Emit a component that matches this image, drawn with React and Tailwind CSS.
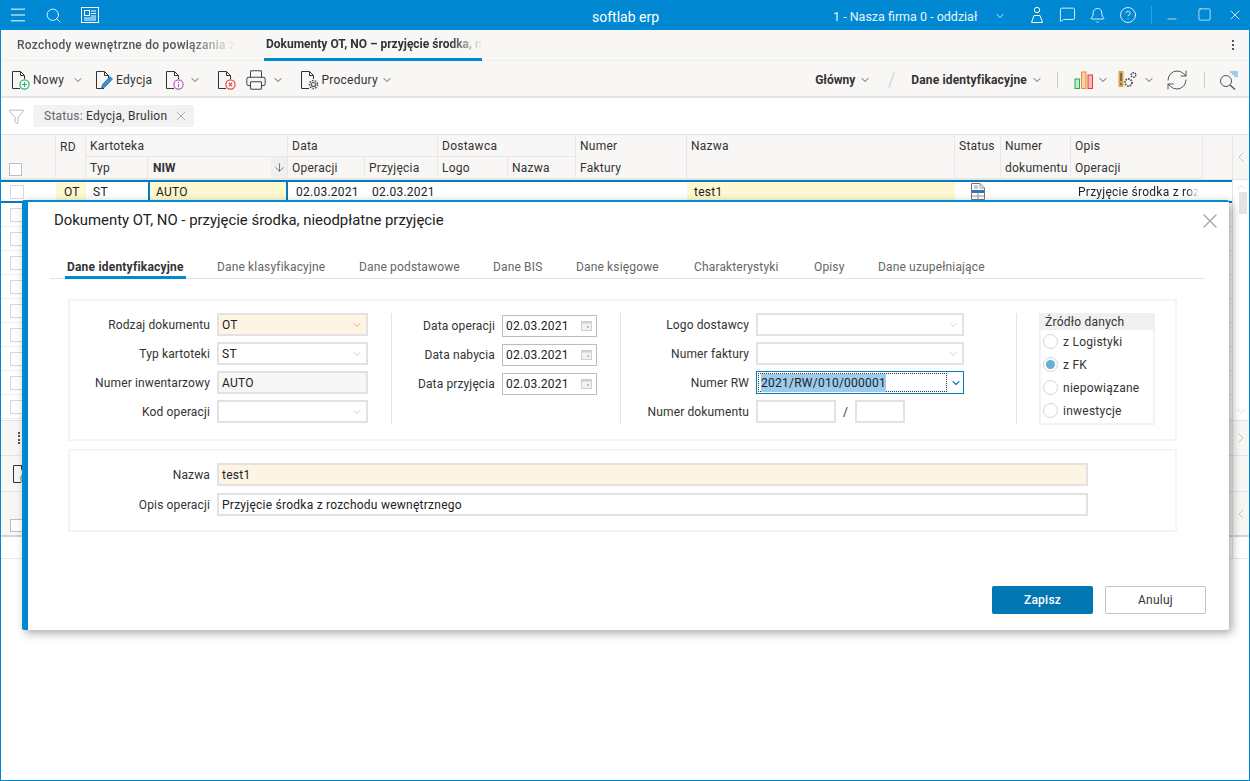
import { ChevronDown, ChevronLeft, ChevronRight, ChevronUp, X, Search, Menu, MessageSquare, Bell, CircleHelp, Minus, Square, RefreshCw, ArrowDown, Filter, Printer } from "lucide-react";

function Doc({ badge }) {
  return (
    <svg width="20" height="20" viewBox="0 0 20 20" fill="none">
      <path d="M9 18.5H1.5V1.5H9.5L13.5 5.5V9" stroke="#333" strokeWidth="1" />
      <path d="M9.5 1.5V5.5H13.5" stroke="#333" strokeWidth="1" />
      {badge}
    </svg>
  );
}

const GreenPlus = (
  <g stroke="#27b36a" strokeWidth="1.2" fill="#fff">
    <circle cx="13.5" cy="14.5" r="4.6" />
    <path d="M13.5 12V17M11 14.5H16" />
  </g>
);
const Pencil = (
  <g>
    <path d="M6.5 18L7.5 14.5L15 6.5L17.5 9L10 17Z" fill="#3a8fd0" stroke="#1f6fb0" strokeWidth="0.8" />
  </g>
);
const InfoBadge = (
  <g stroke="#b45cc0" strokeWidth="1.2" fill="#fff">
    <circle cx="13.5" cy="14.5" r="4.6" />
    <path d="M13.5 14V17.2M13.5 11.8V12.9" />
  </g>
);
const RedX = (
  <g stroke="#e0413a" strokeWidth="1.2" fill="#fff">
    <circle cx="13.5" cy="14.5" r="4.6" />
    <path d="M11.7 12.7L15.3 16.3M15.3 12.7L11.7 16.3" />
  </g>
);
const Gear = (
  <g stroke="#555" strokeWidth="1.2" fill="#fff">
    <circle cx="13.5" cy="14.5" r="2" />
    <circle cx="13.5" cy="14.5" r="4" strokeDasharray="1.6 1.2" strokeWidth="1.6" fill="none" />
  </g>
);

function Chev({ className = "text-[#444]", sw = 1.6 }) {
  return <ChevronDown size={12} strokeWidth={sw} className={className} />;
}

function Sel({ w = "w-[151px]", bg = "bg-white", text, chev = "text-[#c4c4c4]" }) {
  return (
    <div className={`${w} ${bg} h-[23px] border-2 border-[#e2e2e2] flex items-center justify-between pl-[3px] pr-[3px] text-[#222]`}>
      <span className="pt-px">{text}</span>
      <Chev className={chev} />
    </div>
  );
}

function Field({ label, w = "w-[140px]", children }) {
  return (
    <div className="flex items-center gap-[7px] h-[23px]">
      <span className={`${w} text-right text-[#333] pt-px tracking-[0.13px]`}>{label}</span>
      {children}
    </div>
  );
}

function DateInput({ v }) {
  return (
    <div className="w-[95px] h-[22px] border border-[#bdbdbd] flex items-center justify-between pl-[3px] pr-[3px] text-[#222]">
      <span>{v}</span>
      <svg width="12" height="12" viewBox="0 0 12 12" fill="none">
        <rect x="0.5" y="1.5" width="10" height="9" fill="#f2f2f2" stroke="#cfcfcf" />
        <rect x="0.5" y="1.5" width="10" height="2" fill="#cfcfcf" />
        <rect x="6" y="6" width="2" height="2" fill="#bbb" />
      </svg>
    </div>
  );
}

function Radio({ label, on }) {
  return (
    <div className="flex items-center gap-[5px] h-[23px] pl-[1px]">
      <span className="w-[15px] h-[15px] rounded-full border border-[#d4d4d4] flex items-center justify-center">
        {on && <span className="w-[9px] h-[9px] rounded-full bg-[#66afd9]" />}
      </span>
      <span className="text-[#333]">{label}</span>
    </div>
  );
}

const gridCols = "grid-cols-[55px_30px_62px_140px_77px_73px_70px_68px_111px_268px_46px_70px_132px]";

function HeadCell({ className = "", children }) {
  return (
    <div className={`flex items-center pl-[4px] border-r border-b border-[#e8e8e8] text-[#333] ${className}`}>
      {children}
    </div>
  );
}

export default function App() {
  const rows = [0, 1, 2, 3, 4, 5, 6, 7, 8];
  const tabs = [
    ["Dane identyfikacyjne", "w-[150px]"],
    ["Dane klasyfikacyjne", "w-[142px]"],
    ["Dane podstawowe", "w-[134px]"],
    ["Dane BIS", "w-[83px]"],
    ["Dane księgowe", "w-[118px]"],
    ["Charakterystyki", "w-[120px]"],
    ["Opisy", "w-[64px]"],
    ["Dane uzupełniające", "w-[120px]"],
  ];

  return (
    <div
      className="relative w-[1250px] h-[781px] overflow-hidden bg-white border border-[#0088d3] text-[12px] tracking-[0.25px]"
      style={{ fontFamily: "Roboto, 'Liberation Sans', sans-serif" }}
    >
      {/* title bar */}
      <div className="h-[30px] -mt-px -mx-px bg-[#0088d3] flex items-center text-white relative">
        <Menu size={20} strokeWidth={1.2} className="ml-[8px]" />
        <Search size={17} strokeWidth={1.2} className="ml-[17px]" />
        <svg width="18" height="16" viewBox="0 0 18 16" fill="none" stroke="#fff" className="ml-[19px]">
          <rect x="0.5" y="0.5" width="17" height="15" />
          <rect x="3.5" y="3.5" width="5" height="5" />
          <path d="M10 4H15M10 6.5H15M10 9H15M3 11H15M3 13H15" />
        </svg>
        <span className="absolute left-[592px] top-[7px] text-[14px] tracking-normal">softlab erp</span>
        <span className="absolute left-[833px] top-[8px] text-[12.5px] tracking-normal text-[#e6f4fb]">1 - Nasza firma 0 - oddział</span>
        <Chev className="absolute left-[994px] top-[10px] text-white" />
        <svg width="14" height="18" viewBox="0 0 14 18" fill="none" stroke="#fff" className="absolute left-[1030px] top-[6px]">
          <circle cx="7" cy="4" r="2.7" />
          <path d="M1.5 16.5L4 9.5H10L12.5 16.5Z" />
        </svg>
        <MessageSquare size={17} strokeWidth={1.2} className="absolute left-[1059px] top-[6px]" />
        <Bell size={17} strokeWidth={1.2} className="absolute left-[1089px] top-[7px]" />
        <CircleHelp size={18} strokeWidth={1.1} className="absolute left-[1119px] top-[6px]" />
        <span className="absolute left-[1151px] top-[6px] w-px h-[18px] bg-[#2e9fdc]" />
        <Minus size={14} strokeWidth={1.2} className="absolute left-[1165px] top-[12px]" />
        <Square size={15} strokeWidth={1.1} className="absolute left-[1197px] top-[7px]" />
        <X size={16} strokeWidth={1.2} className="absolute left-[1227px] top-[7px]" />
      </div>

      {/* tabs */}
      <div className="h-[31px] bg-[#f8f7f5] border-b border-[#eeeeec] flex items-center relative">
        <span className="ml-[16px] w-[219px] whitespace-nowrap text-[#555] font-medium tracking-[0.25px] [mask-image:linear-gradient(to_right,#000_78%,transparent)]">
          Rozchody wewnętrzne do powiązania z
        </span>
        <div className="ml-[28px] w-[218px] h-[31px] border-b-[3px] border-[#0088d3] flex items-center pl-[2px]">
          <span className="whitespace-nowrap font-bold text-[#333] tracking-normal [mask-image:linear-gradient(to_right,#000_85%,transparent)]">
            Dokumenty OT, NO – przyjęcie środka, n
          </span>
        </div>
        <span className="absolute left-[1231px] top-[10px] w-[2px] h-[10px] border-l-2 border-dotted border-[#555]" />
      </div>

      {/* toolbar */}
      <div className="h-[37px] pt-[3px] bg-[#f8f7f5] border-b-2 border-[#e4e4e4] flex items-center text-[#333] relative">
        <div className="ml-[10px] flex items-center">
          <Doc badge={GreenPlus} />
          <span className="ml-[2px]">Nowy</span>
          <Chev className="ml-[8px] text-[#444]" />
        </div>
        <div className="ml-[11px] flex items-center">
          <Doc badge={Pencil} />
          <span className="ml-px">Edycja</span>
        </div>
        <div className="ml-[13px] flex items-center">
          <Doc badge={InfoBadge} />
          <Chev className="ml-[4px]" />
        </div>
        <div className="ml-[16px]">
          <Doc badge={RedX} />
        </div>
        <div className="ml-[8px] flex items-center">
          <Printer size={22} strokeWidth={1.1} className="text-[#444]" />
          <Chev className="ml-[5px]" />
        </div>
        <div className="ml-[16px] flex items-center">
          <Doc badge={Gear} />
          <span className="ml-[1px]">Procedury</span>
          <Chev className="ml-[3px]" />
        </div>

        <div className="ml-auto flex items-center">
          <span className="font-bold tracking-normal">Główny</span>
          <Chev className="ml-[4px]" />
          <span className="ml-[20px] w-px h-[16px] bg-[#ccc] rotate-[20deg]" />
          <span className="ml-[19px] font-bold tracking-[0.15px]">Dane identyfikacyjne</span>
          <Chev className="ml-[4px]" />
          <span className="ml-[14px] w-px h-[16px] bg-[#ccc]" />
          <svg width="20" height="20" viewBox="0 0 20 20" className="ml-[16px]" fill="none">
            <rect x="1" y="9" width="4.5" height="9.5" fill="#bfe8cf" stroke="#1fae62" />
            <rect x="7.5" y="2" width="4.5" height="16.5" fill="#fbd3a6" stroke="#ea8a2c" />
            <rect x="14" y="5" width="4.5" height="13.5" fill="#f7b9b9" stroke="#e23b3b" />
          </svg>
          <Chev className="ml-[3px]" />
          <svg width="20" height="20" viewBox="0 0 20 20" className="ml-[9px]" fill="none">
            <rect x="0.5" y="1" width="5" height="16" fill="#d8a64a" />
            <path d="M3 3V11M3 13V15" stroke="#555" strokeWidth="1.4" />
            <circle cx="10.5" cy="12.5" r="3.5" stroke="#555" strokeWidth="1.8" strokeDasharray="1.6 1" />
            <circle cx="15.5" cy="5" r="2.3" stroke="#444" strokeWidth="1.4" strokeDasharray="1.4 0.8" />
          </svg>
          <Chev className="ml-[5px]" />
          <RefreshCw size={24} strokeWidth={0.9} className="ml-[10px] text-[#444]" />
          <span className="ml-[15px] w-px h-[16px] bg-[#ccc]" />
          <svg width="20" height="20" viewBox="0 0 20 20" className="ml-[14px] mr-[10px]" fill="none">
            <circle cx="7" cy="11" r="5.5" stroke="#555" />
            <path d="M11 15L16 19.5" stroke="#555" strokeWidth="1.4" />
            <path d="M11 2H19M13 4H19M15 6H19" stroke="#4a9fd8" />
          </svg>
        </div>
      </div>

      {/* filter */}
      <div className="h-[37px] flex items-center border-b border-[#e4e4e4]">
        <Filter size={17} strokeWidth={1} className="ml-[7px] text-[#9a9a9a]" />
        <div className="ml-[8px] w-[161px] h-[22px] rounded-[2px] bg-[#f2f2f2] flex items-center pl-[11px] text-[#333]">
          <span className="text-[#666]">Status:</span>
          <span className="ml-[3px]">Edycja, Brulion</span>
          <X size={16} strokeWidth={1} className="ml-[6px] text-[#888]" />
        </div>
      </div>

      {/* grid */}
      <div className="flex">
        <div className="w-[1231px]">
          <div className={`grid ${gridCols} grid-rows-[22px_22px] bg-[#f8f7f5] border-b border-[#e4e4e4] w-[1231px]`}>
            <HeadCell className="row-span-2 items-end pb-[2px] pl-[8px]">
              <span className="w-[13px] h-[13px] border border-[#bdbdbd] bg-white" />
            </HeadCell>
            <HeadCell className="row-span-2 items-start pt-[3px]">RD</HeadCell>
            <HeadCell className="col-span-2">Kartoteka</HeadCell>
            <HeadCell className="col-span-2">Data</HeadCell>
            <HeadCell className="col-span-2">Dostawca</HeadCell>
            <HeadCell className="border-b-0">Numer</HeadCell>
            <HeadCell className="border-b-0">Nazwa</HeadCell>
            <HeadCell className="border-b-0 pl-[2px]">Status</HeadCell>
            <HeadCell className="border-b-0 pl-[2px]">Numer</HeadCell>
            <HeadCell className="border-b-0">Opis</HeadCell>
            <HeadCell>Typ</HeadCell>
            <HeadCell className="font-bold tracking-normal justify-between pl-[5px] pr-0">
              NIW
              <span className="w-[16px] h-full bg-[#f0f0ee] flex items-center justify-center">
                <ArrowDown size={13} strokeWidth={1.4} className="text-[#555]" />
              </span>
            </HeadCell>
            <HeadCell>Operacji</HeadCell>
            <HeadCell>Przyjęcia</HeadCell>
            <HeadCell>Logo</HeadCell>
            <HeadCell>Nazwa</HeadCell>
            <HeadCell>Faktury</HeadCell>
            <HeadCell />
            <HeadCell />
            <HeadCell className="whitespace-nowrap pl-[3px]">dokumentu</HeadCell>
            <HeadCell>Operacji</HeadCell>
          </div>

          {/* selected row */}
          <div className={`grid ${gridCols} h-[23px] border-y-2 border-[#0a7ab8] text-[#222]`}>
            <div className="flex items-center pl-[9px]">
              <span className="w-[14px] h-[14px] border border-[#d8d8d8]" />
            </div>
            <div className="bg-[#fdf8cf] flex items-center pl-[8px]">OT</div>
            <div className="flex items-center pl-[7px]">ST</div>
            <div className="bg-[#fdf8cf] border-x-2 border-[#0a7ab8] flex items-center pl-[6px]">AUTO</div>
            <div className="flex items-center pl-[8px]">02.03.2021</div>
            <div className="flex items-center pl-[7px]">02.03.2021</div>
            <div />
            <div />
            <div />
            <div className="bg-[#fdf8cf] flex items-center pl-[7px]">test1</div>
            <div className="flex justify-center">
              <svg width="14" height="18" viewBox="0 0 14 18" fill="none">
                <path d="M0.5 17.5V1.5H9L13.5 6V17.5Z" stroke="#777" />
                <path d="M9 1.5V6H13.5M3 4H7M3 6H7" stroke="#999" />
                <rect x="1" y="8" width="12" height="3" fill="#2b78b8" />
                <path d="M7 11V17.5M1 14H13" stroke="#999" />
              </svg>
            </div>
            <div />
            <div className="w-[128px] flex items-center pl-[7px] whitespace-nowrap [mask-image:linear-gradient(to_right,#000_90%,transparent)]">
              Przyjęcie środka z roz
            </div>
          </div>

          {rows.map((r) => (
            <div key={r} className="h-[24px] border-b border-[#eeeeee] flex items-center pl-[9px]">
              <span className="w-[14px] h-[14px] border border-[#d8d8d8]" />
            </div>
          ))}
          <div className="h-px" />

          {/* lower panel */}
          <div className="h-[36px] bg-[#f8f7f5] border-y border-[#e4e4e4] flex items-center pl-[17px]">
            <span className="w-[2px] h-[12px] border-l-2 border-dotted border-[#555]" />
          </div>
          <div className="h-[36px] bg-[#f8f7f5] border-b border-[#e4e4e4] flex items-center pl-[11px]">
            <Doc badge={GreenPlus} />
          </div>
          <div className="h-[45px] bg-[#f8f7f5] border-b-2 border-[#d4d4d4] flex items-end pb-[3px] pl-[9px]">
            <span className="w-[13px] h-[13px] border border-[#bdbdbd] bg-white" />
          </div>
          <div className="h-[22px] border-b border-[#e8e8e8]" />
        </div>

        {/* right strip */}
        <div className="w-[17px] border-l border-[#e4e4e4]">
          <div className="h-[45px] bg-[#f8f7f5] border-b border-[#e4e4e4] flex items-center justify-center">
            <ChevronLeft size={18} strokeWidth={1} className="text-[#aaa]" />
          </div>
          <div className="h-[240px] flex flex-col items-center">
            <ChevronUp size={14} strokeWidth={1} className="text-[#ccc]" />
            <span className="w-[8px] h-[22px] bg-[#e4e4e4] mt-[-2px] ml-[3px]" />
            <ChevronDown size={14} strokeWidth={1} className="text-[#ccc] mt-auto mb-[2px]" />
          </div>
          <div className="h-[36px] bg-[#f8f7f5] border-y border-[#e4e4e4] flex items-center justify-center">
            <ChevronRight size={18} strokeWidth={1} className="text-[#aaa]" />
          </div>
          <div className="h-[36px] bg-[#f8f7f5] border-b border-[#e4e4e4]" />
          <div className="h-[45px] bg-[#f8f7f5] border-b-2 border-[#d4d4d4] flex items-center justify-center">
            <ChevronLeft size={18} strokeWidth={1} className="text-[#aaa]" />
          </div>
          <div className="h-[22px] border-b border-[#e8e8e8]" />
        </div>
      </div>

      {/* modal */}
      <div className="absolute left-[21px] top-[199px] w-[1207px] h-[430px] bg-white border-l-[6px] border-t-2 border-[#0088d3] rounded-[2px] shadow-[3px_3px_10px_rgba(0,0,0,0.35)] text-[#333]">
        <div className="h-[37px] flex items-center pl-[26px] relative">
          <span className="text-[14.9px] tracking-normal text-[#222]">Dokumenty OT, NO - przyjęcie środka, nieodpłatne przyjęcie</span>
          <X size={24} strokeWidth={1.4} className="absolute left-[1170px] top-[7px] text-[#aaa]" />
        </div>

        <div className="mt-[14px] ml-[22px] w-[1155px] h-[26px] border-b border-[#e4e4e4] flex pl-[17px]">
          {tabs.map(([t, w], i) => (
            <div key={t} className={w}>
              <span className={i === 0 ? "inline-block h-[26px] pt-[5px] -ml-[2px] px-[2px] font-bold tracking-[0.2px] text-[#333] border-b-[3px] border-[#0088d3]" : "inline-block pt-[5px] tracking-[0.15px] text-[#666]"}>
                {t}
              </span>
            </div>
          ))}
        </div>

        <div className="ml-[40px] mt-[20px] w-[1109px] h-[142px] border-2 border-[#f4f4f4] flex pt-[12px] relative">
          <div className="flex flex-col gap-[6px] w-[321px]">
            <Field label="Rodzaj dokumentu"><Sel bg="bg-[#fdf4e4]" text="OT" chev="text-[#d89a7a]" /></Field>
            <Field label="Typ kartoteki"><Sel text="ST" /></Field>
            <Field label="Numer inwentarzowy">
              <div className="w-[151px] h-[23px] bg-[#f7f7f7] border-2 border-[#e2e2e2] flex items-center pl-[3px] pt-px text-[#222]">AUTO</div>
            </Field>
            <Field label="Kod operacji"><Sel text="" /></Field>
          </div>
          <div className="w-px h-[111px] bg-[#e4e4e4]" />
          <div className="flex flex-col gap-[6px] w-[228px] pt-[1px]">
            <Field label="Data operacji" w="w-[103px]"><DateInput v="02.03.2021" /></Field>
            <Field label="Data nabycia" w="w-[103px]"><DateInput v="02.03.2021" /></Field>
            <Field label="Data przyjęcia" w="w-[103px]"><DateInput v="02.03.2021" /></Field>
          </div>
          <div className="w-px h-[111px] bg-[#e4e4e4]" />
          <div className="flex flex-col gap-[6px] w-[395px]">
            <Field label="Logo dostawcy" w="w-[128px]"><Sel w="w-[208px]" text="" /></Field>
            <Field label="Numer faktury" w="w-[128px]"><Sel w="w-[208px]" text="" /></Field>
            <Field label="Numer RW" w="w-[128px]">
              <div className="w-[208px] h-[23px] border border-[#0a7ab8] flex items-stretch text-[#222]">
                <div className="flex-1 m-px border border-dotted border-[#333] flex items-center pl-[2px]">
                  <span className="bg-[#9ccbec]">2021/RW/010/000001</span>
                </div>
                <div className="w-[15px] flex items-center justify-center">
                  <Chev className="text-[#0a7ab8]" sw={2.2} />
                </div>
              </div>
            </Field>
            <Field label="Numer dokumentu" w="w-[128px]">
              <div className="flex items-center">
                <div className="w-[80px] h-[23px] border-2 border-[#e2e2e2]" />
                <span className="mx-[4px] w-[11px] text-center">/</span>
                <div className="w-[50px] h-[23px] border-2 border-[#e2e2e2]" />
              </div>
            </Field>
          </div>
          <div className="w-px h-[111px] bg-[#e4e4e4]" />
          <div className="ml-[22px] w-[116px] h-[112px] border-2 border-[#f2f2f2] border-t-0">
            <div className="-mx-[2px] h-[17px] bg-[#f0f0f0] pl-[6px] flex items-center text-[#333]">Źródło danych</div>
            <div className="pl-[1px]">
              <Radio label="z Logistyki" />
              <Radio label="z FK" on />
              <Radio label="niepowiązane" />
              <Radio label="inwestycje" />
            </div>
          </div>
        </div>

        <div className="ml-[40px] mt-[8px] w-[1109px] h-[83px] border-2 border-[#f4f4f4] pt-[12px] flex flex-col gap-[7px]">
          <Field label="Nazwa">
            <div className="w-[871px] h-[23px] bg-[#fdf4e4] border-2 border-[#e2e2e2] flex items-center pl-[3px] text-[#222]">test1</div>
          </Field>
          <Field label="Opis operacji">
            <div className="w-[871px] h-[23px] border-2 border-[#e2e2e2] flex items-center pl-[3px] text-[#222]">Przyjęcie środka z rozchodu wewnętrznego</div>
          </Field>
        </div>

        <div className="mt-[54px] ml-[964px] flex gap-[12px]">
          <button className="w-[101px] h-[28px] rounded-[2px] bg-[#0077b3] text-white font-medium">Zapisz</button>
          <button className="w-[101px] h-[28px] rounded-[2px] bg-white border border-[#c4c4c4] text-[#333]">Anuluj</button>
        </div>
      </div>
    </div>
  );
}
